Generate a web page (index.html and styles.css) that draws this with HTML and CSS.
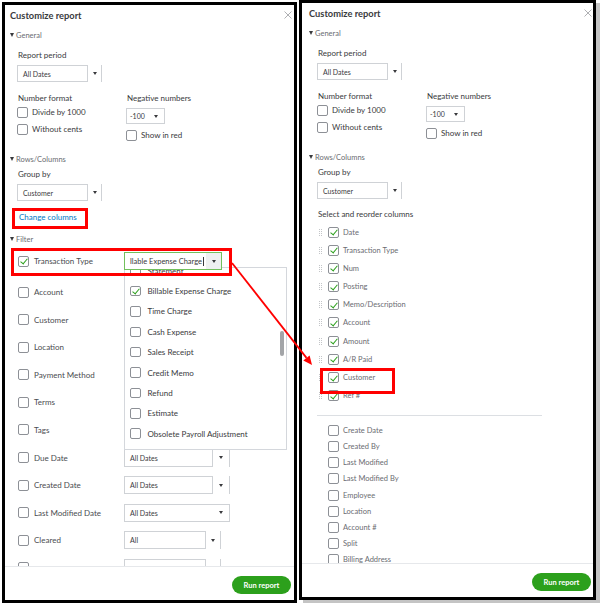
FILE: index.html
```html
<!DOCTYPE html>
<html>
<head>
<meta charset="UTF-8">
<title>Customize report</title>
<link rel="stylesheet" href="styles.css">
</head>
<body>
<div class="desk">

  <!-- filter view -->
  <section class="panel panel-a">
    <div class="panel-body">
      <div class="panel-head">
        <h1>Customize report</h1>
        <svg class="close" viewBox="0 0 8 8"><path d="M0.5 0.5L7.5 7.5M7.5 0.5L0.5 7.5"/></svg>
      </div>

      <h2 class="sec sec-general">General</h2>
      <div class="indent">
        <div class="lbl lbl-period">Report period</div>
        <div class="select wide"><span class="sv">All Dates</span><span class="sa"></span></div>
        <div class="cols2">
          <div class="col">
            <div class="lbl">Number format</div>
            <div class="check"><span class="cb"></span>Divide by 1000</div>
            <div class="check check-2"><span class="cb"></span>Without cents</div>
          </div>
          <div class="col">
            <div class="lbl">Negative numbers</div>
            <div class="select boxed neg"><span class="sv">-100</span><span class="sa"></span></div>
            <div class="check check-red"><span class="cb"></span>Show in red</div>
          </div>
        </div>
      </div>

      <h2 class="sec sec-rows">Rows/Columns</h2>
      <div class="indent">
        <div class="lbl lbl-group">Group by</div>
        <div class="select wide"><span class="sv">Customer</span><span class="sa"></span></div>
        <a class="link">Change columns</a>
      </div>

      <h2 class="sec sec-filter">Filter</h2>
      <div class="filters">
        <div class="frow frow-tt">
          <span class="cb on"></span><span class="flabel">Transaction Type</span>
          <div class="dd">
            <div class="select boxed focus"><span class="sv">llable Expense Charge<i class="caret-bar"></i></span><span class="sa"></span></div>
            <div class="pop">
              <ul class="pop-list">
                <li><span class="cb"></span>Statement</li>
                <li><span class="cb on"></span>Billable Expense Charge</li>
                <li><span class="cb"></span>Time Charge</li>
                <li><span class="cb"></span>Cash Expense</li>
                <li><span class="cb"></span>Sales Receipt</li>
                <li><span class="cb"></span>Credit Memo</li>
                <li><span class="cb"></span>Refund</li>
                <li><span class="cb"></span>Estimate</li>
                <li><span class="cb"></span>Obsolete Payroll Adjustment</li>
                <li><span class="cb"></span></li>
              </ul>
              <span class="thumb"></span>
            </div>
          </div>
        </div>
        <div class="frow frow-first"><span class="cb"></span><span class="flabel">Account</span></div>
        <div class="frow"><span class="cb"></span><span class="flabel">Customer</span></div>
        <div class="frow"><span class="cb"></span><span class="flabel">Location</span></div>
        <div class="frow"><span class="cb"></span><span class="flabel">Payment Method</span></div>
        <div class="frow"><span class="cb"></span><span class="flabel">Terms</span></div>
        <div class="frow"><span class="cb"></span><span class="flabel">Tags</span></div>
        <div class="frow"><span class="cb"></span><span class="flabel">Due Date</span>
          <div class="select date"><span class="sv">All Dates</span><span class="sa"></span></div></div>
        <div class="frow"><span class="cb"></span><span class="flabel">Created Date</span>
          <div class="select date"><span class="sv">All Dates</span><span class="sa"></span></div></div>
        <div class="frow"><span class="cb"></span><span class="flabel">Last Modified Date</span>
          <div class="select date boxed"><span class="sv">All Dates</span><span class="sa"></span></div></div>
        <div class="frow"><span class="cb"></span><span class="flabel">Cleared</span>
          <div class="select all"><span class="sv">All</span><span class="sa"></span></div></div>
        <div class="frow"><span class="cb"></span><span class="flabel"></span>
          <div class="select all"><span class="sv"></span><span class="sa"></span></div></div>
      </div>
    </div>
    <div class="panel-foot"><button class="run">Run report</button></div>
  </section>

  <!-- columns view -->
  <section class="panel panel-b">
    <div class="panel-body">
      <div class="panel-head">
        <h1>Customize report</h1>
        <svg class="close" viewBox="0 0 8 8"><path d="M0.5 0.5L7.5 7.5M7.5 0.5L0.5 7.5"/></svg>
      </div>

      <h2 class="sec sec-general">General</h2>
      <div class="indent">
        <div class="lbl lbl-period">Report period</div>
        <div class="select wide"><span class="sv">All Dates</span><span class="sa"></span></div>
        <div class="cols2">
          <div class="col">
            <div class="lbl">Number format</div>
            <div class="check"><span class="cb"></span>Divide by 1000</div>
            <div class="check check-2"><span class="cb"></span>Without cents</div>
          </div>
          <div class="col">
            <div class="lbl">Negative numbers</div>
            <div class="select boxed neg"><span class="sv">-100</span><span class="sa"></span></div>
            <div class="check check-red"><span class="cb"></span>Show in red</div>
          </div>
        </div>
      </div>

      <h2 class="sec sec-rows">Rows/Columns</h2>
      <div class="indent">
        <div class="lbl lbl-group">Group by</div>
        <div class="select wide"><span class="sv">Customer</span><span class="sa"></span></div>
        <div class="lbl lbl-cols">Select and reorder columns</div>
        <ul class="clist">
          <li><i class="grip"></i><span class="cb on"></span>Date</li>
          <li><i class="grip"></i><span class="cb on"></span>Transaction Type</li>
          <li><i class="grip"></i><span class="cb on"></span>Num</li>
          <li><i class="grip"></i><span class="cb on"></span>Posting</li>
          <li><i class="grip"></i><span class="cb on"></span>Memo/Description</li>
          <li><i class="grip"></i><span class="cb on"></span>Account</li>
          <li><i class="grip"></i><span class="cb on"></span>Amount</li>
          <li><i class="grip"></i><span class="cb on"></span>A/R Paid</li>
          <li><i class="grip"></i><span class="cb on"></span>Customer</li>
          <li><i class="grip"></i><span class="cb on"></span>Ref #</li>
        </ul>
        <hr class="split">
        <ul class="clist plain">
          <li><span class="cb"></span>Create Date</li>
          <li><span class="cb"></span>Created By</li>
          <li><span class="cb"></span>Last Modified</li>
          <li><span class="cb"></span>Last Modified By</li>
          <li><span class="cb"></span>Employee</li>
          <li><span class="cb"></span>Location</li>
          <li><span class="cb"></span>Account #</li>
          <li><span class="cb"></span>Split</li>
          <li><span class="cb"></span>Billing Address</li>
        </ul>
      </div>
    </div>
    <div class="panel-foot"><button class="run">Run report</button></div>
  </section>

  <!-- callouts drawn on top -->
  <svg class="callouts" viewBox="0 0 602 603">
    <rect x="13.5" y="209.5" width="73" height="18"/>
    <rect x="12.5" y="249.5" width="218" height="25"/>
    <rect x="321.5" y="369.5" width="72" height="23"/>
    <line x1="232" y1="263" x2="306.5" y2="357.9"/>
    <polygon points="312,365 303.3,360.4 309.6,355.4"/>
  </svg>
</div>
</body>
</html>
```

FILE: styles.css
```css
*{
    margin:0;
    padding:0;
    box-sizing:border-box;
}
ul,li{
    list-style:none;
}
body{
    background:#fff;
    font-family:Lato,"Open Sans",sans-serif;
    color:#393a3d;
}
.desk{
    position:relative;
    width:602px;
    height:603px;
    display:flex;
    align-items:flex-start;
    gap:2px;
    padding-left:2px;
    overflow:hidden;
}

/* panels */
.panel{
    display:flex;
    flex-direction:column;
    border:3px solid #000;
    background:#fff;
}
.panel-a{
    width:295px;
    height:601px;
    margin-top:2px;
    --ind:7px;
}
.panel-b{
    width:297px;
    height:600px;
    box-shadow:4px 3px 0 #c4c4c4;
    --ind:8px;
}
.panel-body{
    flex:1;
    overflow:hidden;
    padding:0 2px 0 5px;
}
.panel-b .panel-body{
    padding:0 1px 0 7px;
}
.panel-head{
    height:20px;
    display:flex;
    align-items:center;
    justify-content:space-between;
}
.panel-head h1{
    font-size:9.3px;
    font-weight:700;
    color:#393a3d;
}
.close{
    width:8px;
    height:8px;
    stroke:#9a9ca0;
    stroke-width:0.8;
    fill:none;
}
.panel-foot{
    height:34px;
    flex:none;
    border-top:1px solid #e6e8eb;
    display:flex;
    justify-content:flex-end;
    align-items:center;
    padding:3px 3px 0 0;
}
.panel-b .panel-foot{
    padding-right:2px;
}
.run{
    width:59px;
    height:18px;
    border:none;
    border-radius:9px;
    background:#2ca01c;
    color:#fff;
    font-family:Lato,"Open Sans",sans-serif;
    font-size:7.5px;
    font-weight:700;
}

/* section headings */
.sec{
    display:flex;
    align-items:center;
    gap:2px;
    height:12px;
    font-size:7.5px;
    font-weight:400;
    color:#6b6c72;
}
.sec::before{
    content:"";
    border-left:2.5px solid transparent;
    border-right:2.5px solid transparent;
    border-top:4px solid #393a3d;
}
.sec-general{ margin-top:4px; }
.sec-rows{ margin-top:11px; }
.sec-filter{ margin-top:10px; }

.indent{
    padding-left:var(--ind);
}
.lbl{
    height:12px;
    line-height:12px;
    font-size:8px;
    padding-left:1px;
    color:#393a3d;
}
.lbl-period{ margin-top:8px; }
.lbl-group{ margin-top:3px; }
.lbl-cols{ margin-top:9px; }

/* selects */
.select{
    display:flex;
    height:17px;
    font-size:7px;
    color:#393a3d;
    margin-top:4px;
}
.select .sv{
    flex:1;
    display:flex;
    align-items:center;
    padding-left:5px;
    border:1px solid #cfd2d6;
    white-space:nowrap;
    overflow:hidden;
}
.select .sa{
    width:14px;
    flex:none;
    display:flex;
    align-items:center;
    justify-content:center;
    border-right:1px solid #cfd2d6;
}
.select .sa::before{
    content:"";
    border-left:2px solid transparent;
    border-right:2px solid transparent;
    border-top:3px solid #393a3d;
}
.select.wide{ width:85px; }
.select.boxed{
    border:1px solid #cfd2d6;
}
.select.boxed .sv,
.select.boxed .sa{
    border:none;
}
.select.neg{
    width:39px;
    height:16px;
    margin-top:3px;
}
.select.neg .sv{ padding-left:3px; }
.select.neg .sa{ width:16px; }

/* checkboxes */
.cb{
    position:relative;
    width:11px;
    height:11px;
    flex:none;
    border:1px solid #8d9096;
    border-radius:2px;
    background:#fff;
}
.cb.on::after{
    content:"";
    position:absolute;
    left:3.2px;
    top:0.6px;
    width:3px;
    height:6px;
    border:solid #2ca01c;
    border-width:0 1.6px 1.6px 0;
    transform:rotate(40deg);
}
.check{
    display:flex;
    align-items:center;
    gap:4px;
    height:14px;
    font-size:8px;
    margin-top:1px;
}
.check-2{ margin-top:3px; }
.check-red{ margin-top:4px; }

.cols2{
    display:grid;
    grid-template-columns:109px 1fr;
    margin-top:10px;
}
.cols2 .lbl{
    height:13px;
    line-height:13px;
}
.cols2 .check:nth-child(2){
    margin-top:0;
}

.link{
    display:block;
    margin-top:10px;
    height:12px;
    line-height:12px;
    padding-left:2px;
    font-size:8px;
    color:#0077c5;
}

/* filter rows */
.filters{
    padding-left:8px;
}
.frow{
    display:flex;
    align-items:center;
    height:18px;
    margin-top:9.6px;
    font-size:8px;
    color:#4a4c50;
}
.frow-tt{
    height:20px;
    margin-top:6px;
    position:relative;
    z-index:2;
}
.frow-first{ margin-top:12px; }
.frow .cb{
    margin-right:5px;
}
.flabel{
    width:90px;
    flex:none;
    white-space:nowrap;
}
.frow .select{
    margin-top:0;
    height:18px;
}
.select.date{ width:106px; }
.select.date .sa{ width:17px; }
.select.all{ width:97px; }
.select.all .sa{ width:15px; }

.dd{
    position:relative;
}
.select.focus{
    position:relative;
    z-index:2;
    width:98px;
    border-color:#72c05c;
    background:#fff;
}
.select.focus .sv{
    padding-left:5px;
    font-size:7.5px;
}
.select.focus .sa{
    width:15px;
    background:#eef0f1;
}
.caret-bar{
    width:1px;
    height:9px;
    background:#393a3d;
    margin-left:1px;
}

/* open dropdown list */
.pop{
    position:absolute;
    left:0;
    top:15px;
    width:163px;
    height:183px;
    border:1px solid #d4d7dc;
    background:#fff;
    overflow:hidden;
    z-index:1;
}
.pop-list{
    margin-top:-7.6px;
    padding-left:5px;
}
.pop-list li{
    display:flex;
    align-items:center;
    gap:2px;
    height:20.4px;
    font-size:8px;
    color:#393a3d;
    white-space:nowrap;
}
.pop-list .cb{
    width:10.5px;
    height:10.5px;
}
.thumb{
    position:absolute;
    right:2px;
    top:63px;
    width:4px;
    height:25px;
    border-radius:2px;
    background:#a3a5a8;
}

/* column picker */
.clist{
    margin-top:5px;
    display:flex;
    flex-direction:column;
    gap:4.2px;
}
.clist li{
    display:flex;
    align-items:center;
    height:14px;
    font-size:7.5px;
    color:#6b6c72;
    white-space:nowrap;
}
.clist .cb{
    margin-right:4px;
}
.grip{
    width:5px;
    height:7px;
    margin:0 5px 0 1px;
    background:conic-gradient(#c3c5c8 25%, transparent 0) 0 0/2px 2px;
}
.clist.plain{
    margin-top:8px;
    gap:2.1px;
    padding-left:11px;
}
.split{
    margin-top:12px;
    width:225px;
    border:none;
    border-top:1px solid #dcdfe3;
}

/* red callouts */
.callouts{
    position:absolute;
    left:0;
    top:0;
    width:602px;
    height:603px;
    pointer-events:none;
    z-index:5;
}
.callouts rect{
    fill:none;
    stroke:#f00;
    stroke-width:3;
}
.callouts line{
    stroke:#f00;
    stroke-width:1.8;
}
.callouts polygon{
    fill:#f00;
}
```
